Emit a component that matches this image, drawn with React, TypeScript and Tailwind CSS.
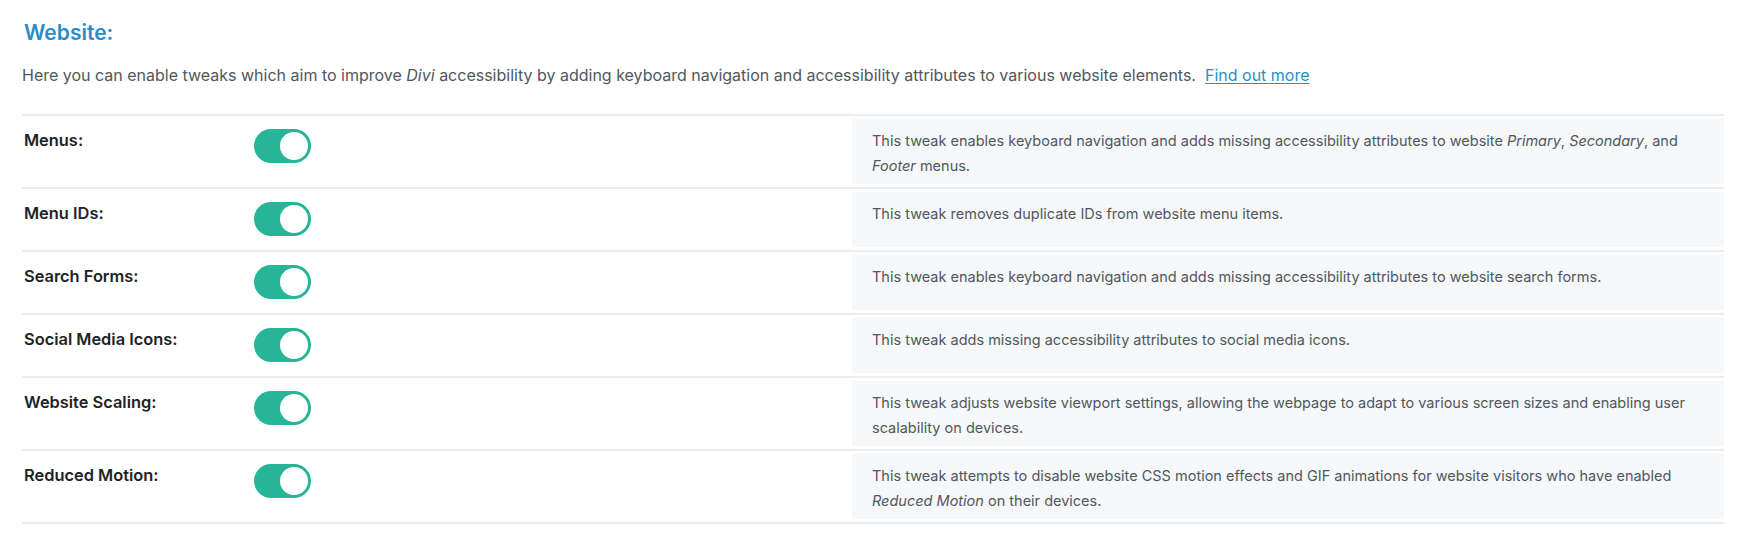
import React from 'react'

type Tweak = {
  label: string
  desc: React.ReactNode
}

const tweaks: Tweak[] = [
  {
    label: 'Menus:',
    desc: (
      <>
        This tweak enables keyboard navigation and adds missing accessibility attributes to website <em>Primary</em>,{' '}
        <em>Secondary</em>, and <em>Footer</em> menus.
      </>
    ),
  },
  { label: 'Menu IDs:', desc: 'This tweak removes duplicate IDs from website menu items.' },
  {
    label: 'Search Forms:',
    desc: 'This tweak enables keyboard navigation and adds missing accessibility attributes to website search forms.',
  },
  { label: 'Social Media Icons:', desc: 'This tweak adds missing accessibility attributes to social media icons.' },
  {
    label: 'Website Scaling:',
    desc: 'This tweak adjusts website viewport settings, allowing the webpage to adapt to various screen sizes and enabling user scalability on devices.',
  },
  {
    label: 'Reduced Motion:',
    desc: (
      <>
        This tweak attempts to disable website CSS motion effects and GIF animations for website visitors who have enabled{' '}
        <em>Reduced Motion</em> on their devices.
      </>
    ),
  },
]

function Toggle() {
  return (
    <button
      type="button"
      role="switch"
      aria-checked="true"
      className="flex h-[34px] w-[57px] items-center justify-end rounded-full bg-[#27b597] p-[3px]"
    >
      <span className="block h-[28px] w-[28px] rounded-full bg-white" />
    </button>
  )
}

export default function App() {
  return (
    <div className="min-h-[555px] bg-white px-[22px] pt-[19px] font-['Inter',sans-serif]">
      <h2 className="pl-[2px] text-[21px] font-semibold leading-[28px] text-[#2a8dc5]">Website:</h2>
      <p className="mt-[16px] text-[16px] leading-[24px] text-[#50575e]">
        Here you can enable tweaks which aim to improve <em>Divi</em> accessibility by adding keyboard navigation and
        accessibility attributes to various website elements.{'\u00a0 '}
        <a href="#" className="text-[#2a8fc4] underline underline-offset-2">
          Find out more
        </a>
      </p>

      <div className="mt-[27px] border-t-2 border-[#ededed]">
        {tweaks.map((t) => (
          <div key={t.label} className="flex border-b-2 border-[#ededed]">
            <div className="w-[232px] self-start pl-[2px] pt-[12px] text-[16.4px] font-semibold leading-[25px] text-[#1d2327]">
              {t.label}
            </div>
            <div className="w-[598px] self-start pb-[14px] pt-[13px]">
              <Toggle />
            </div>
            <div className="my-[3px] flex-1 bg-[#f6f7f8] pb-[6px] pl-[20px] pr-[20px] pt-[9px] text-[14.5px] leading-[25px] text-[#50575e]">
              {t.desc}
            </div>
          </div>
        ))}
      </div>
    </div>
  )
}
